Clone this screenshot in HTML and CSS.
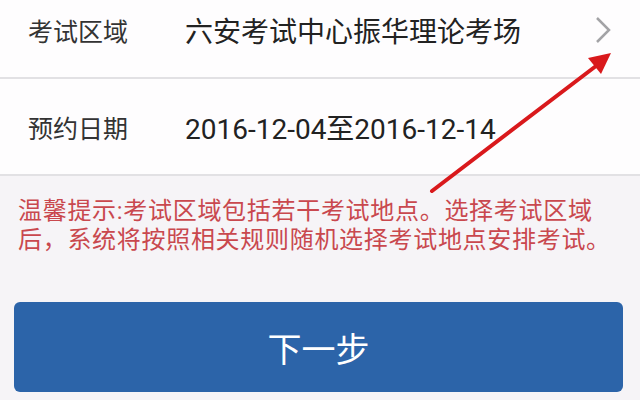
FILE: index.html
```html
<!DOCTYPE html>
<html lang="zh-CN">
<head>
  <meta charset="UTF-8">
  <meta name="viewport" content="width=device-width, initial-scale=1.0">
  <title>预约考试</title>
  <link rel="stylesheet" href="styles.css">
</head>
<body>
  <div class="page">
    <div class="form-list">
      <div class="form-row first">
        <span class="label">考试区域</span>
        <span class="value">六安考试中心振华理论考场</span>
        <svg class="chevron" width="16" height="28" viewBox="0 0 16 28">
          <path d="M2 2 L14 14 L2 26" fill="none" stroke="#a3a3a6" stroke-width="2.5"/>
        </svg>
      </div>
      <div class="form-row">
        <span class="label">预约日期</span>
        <span class="value">2016-12-04至2016-12-14</span>
      </div>
    </div>

    <p class="tip">温馨提示:考试区域包括若干考试地点。选择考试区域后，系统将按照相关规则随机选择考试地点安排考试。</p>

    <div class="actions">
      <button class="next-btn">下一步</button>
    </div>

    <!-- red annotation arrow drawn over the screenshot -->
    <svg class="arrow" width="640" height="400" viewBox="0 0 640 400">
      <line x1="432" y1="191" x2="596" y2="66" stroke="#d9191c" stroke-width="4" stroke-linecap="round"/>
      <polygon points="611,53 588,58 601,74" fill="#d9191c"/>
    </svg>
  </div>
</body>
</html>
```

FILE: styles.css
```css
/* page styles */
body {
  margin: 0;
  padding: 0;
  background-color: #f6f4f7;
  font-family: "Roboto", "Noto Sans CJK SC", sans-serif;
}

.page {
  position: relative;
  width: 640px;
  height: 400px;
  overflow: hidden;
}

.form-list {
  background-color: #fefdfe;
}

.form-row {
  display: flex;
  align-items: center;
  height: 95px;
  padding: 0 29px 0 28px;
  border-bottom: 2px solid #e2e1e4;
}

.form-row.first {
  height: 60px;
  padding-bottom: 17px;
}

.label {
  width: 157px;
  font-size: 25px;
  color: #333;
}

.value {
  font-size: 28px;
  color: #222;
}

.chevron {
  margin-left: auto;
}

.tip {
  margin: 0;
  padding: 21px 20px 0 18px;
  height: 105px;
  font-size: 24px;
  line-height: 29px;
  color: #c9484e;
  letter-spacing: 0.7px;
}

.actions {
  padding: 0 17px 0 14px;
}

.next-btn {
  display: block;
  width: 100%;
  height: 90px;
  border: none;
  border-radius: 6px;
  background-color: #2c64a9;
  color: #fff;
  font-family: "Noto Sans CJK SC", sans-serif;
  font-size: 34px;
}

.arrow {
  position: absolute;
  top: 0;
  left: 0;
  pointer-events: none;
}
```
